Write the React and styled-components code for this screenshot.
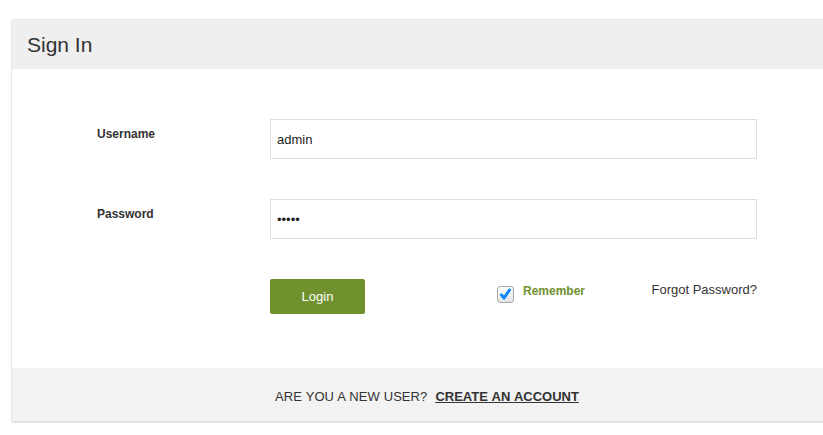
import React from "react";
import styled, { createGlobalStyle } from "styled-components";

const Global = createGlobalStyle`
  html, body { margin: 0; padding: 0; background: #fff; overflow: hidden; }
  body { font-family: "Liberation Sans", Arial, sans-serif; color: #333; }
`;

const Page = styled.div`
  padding: 19px 0 0 11px;
  width: 900px;
`;

const Panel = styled.div`
  width: 832px;
  box-sizing: border-box;
  border: 1px solid #e6e6e6;
  border-bottom: 2px solid #e1e1e1;
  border-radius: 4px;
  overflow: hidden;
  background: #fff;
`;

const Header = styled.div`
  height: 49px;
  background: #efefef;
  display: flex;
  align-items: center;
  padding-left: 15px;
  padding-top: 1px;
  box-sizing: border-box;
  font-size: 21px;
  color: #333;
`;

const Body = styled.div`
  padding: 50px 85px 54px;
  display: grid;
  grid-template-columns: 173px 487px;
  row-gap: 40px;
`;

const Label = styled.label`
  font-size: 12px;
  font-weight: bold;
  line-height: 17px;
  padding-top: 7px;
  color: #333;
`;

const Input = styled.input`
  box-sizing: border-box;
  width: 100%;
  height: 40px;
  border: 1px solid #dedede;
  border-radius: 0;
  padding: 0 6px;
  font-family: "Liberation Sans", Arial, sans-serif;
  font-size: 13px;
  color: #222;
  outline: none;
  background: #fff;
`;

const Actions = styled.div`
  grid-column: 2;
  display: flex;
  align-items: flex-start;
`;

const LoginButton = styled.button`
  width: 95px;
  height: 35px;
  background: #6f922e;
  border: none;
  border-radius: 2px;
  color: #fff;
  font-family: "Liberation Sans", Arial, sans-serif;
  font-size: 13px;
  padding: 0;
`;

const Remember = styled.div`
  margin-left: 132px;
  margin-top: 4px;
  display: flex;
  align-items: flex-start;
  gap: 9px;
  font-size: 12px;
  line-height: 17px;
  font-weight: bold;
  color: #6f922e;
`;

const CheckBox = styled.span`
  box-sizing: border-box;
  margin-top: 3px;
  width: 17px;
  height: 17px;
  border: 1px solid #a9a9a9;
  border-radius: 3px;
  background: linear-gradient(#fbfbfb, #e4e4e4);
  display: flex;
  align-items: center;
  justify-content: center;
`;

const Forgot = styled.a`
  margin-left: auto;
  margin-top: 3px;
  font-size: 13px;
  color: #333;
  text-decoration: none;
`;

const Footer = styled.div`
  height: 53px;
  box-sizing: border-box;
  padding-top: 3px;
  background: #f2f2f2;
  display: flex;
  align-items: center;
  justify-content: center;
  font-size: 13px;
  word-spacing: 0.5px;
  color: #333;
  white-space: pre;
`;

const CreateLink = styled.a`
  font-weight: bold;
  color: #333;
  text-decoration: underline;
`;

export default function App() {
  return (
    <Page>
      <Global />
      <Panel>
        <Header>Sign In</Header>
        <Body>
          <Label>Username</Label>
          <Input type="text" defaultValue="admin" readOnly />
          <Label>Password</Label>
          <Input type="password" defaultValue="admin" readOnly />
          <Actions>
            <LoginButton>Login</LoginButton>
            <Remember>
              <CheckBox>
                <svg width="13" height="13" viewBox="0 0 13 13">
                  <path d="M2.5 7 L5 10 L10.5 2" fill="none" stroke="#0a84ff" strokeWidth="3" strokeLinecap="round" strokeLinejoin="round" />
                </svg>
              </CheckBox>
              Remember
            </Remember>
            <Forgot>Forgot Password?</Forgot>
          </Actions>
        </Body>
        <Footer>
          {"ARE YOU A NEW USER?  "}
          <CreateLink>CREATE AN ACCOUNT</CreateLink>
        </Footer>
      </Panel>
    </Page>
  );
}
